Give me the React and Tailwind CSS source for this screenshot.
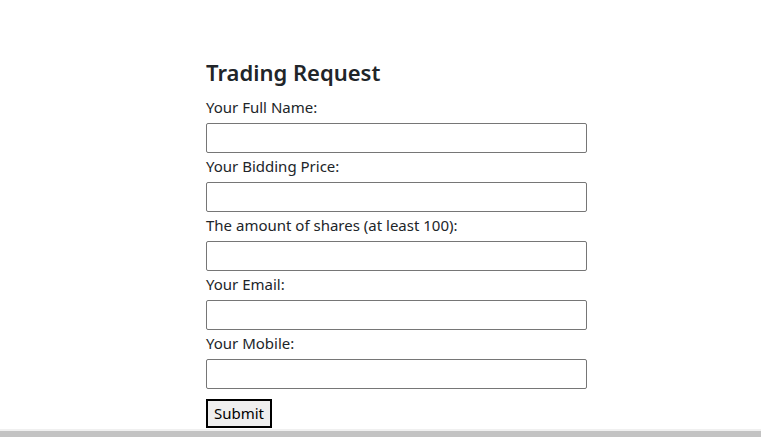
export default function App() {
  const fields = [
    "Your Full Name:",
    "Your Bidding Price:",
    "The amount of shares (at least 100):",
    "Your Email:",
    "Your Mobile:",
  ];
  return (
    <div className="flex min-h-[437px] flex-col bg-white text-[#212529]" style={{ fontFamily: '"Noto Sans", "Open Sans", sans-serif' }}>
      <div className="flex flex-1 justify-start">
        <form className="ml-[206px] mt-[58px] flex w-[381px] flex-col">
          <h3 className="mb-2 text-[22px] font-semibold leading-[29px]">Trading Request</h3>
          {fields.map((f, i) => (
            <div key={i} className="flex flex-col">
              <label className={`${i === 0 ? "" : "mt-[1px]"} text-[15px] leading-[24px]`}>{f}</label>
              <input type="text" className="mt-[4px] h-[30px] w-[381px] rounded-[2px] border border-[#767676] bg-white px-1" />
            </div>
          ))}
          <div className="mt-[10px]">
            <button type="button" className="h-[29px] w-[66px] border-2 border-black bg-[#efefef] text-[15px] leading-none text-black">
              Submit
            </button>
          </div>
        </form>
      </div>
      <div className="h-[2px] bg-[#f0f0f0]" />
      <div className="h-[6px] bg-[#c3c3c3]" />
    </div>
  );
}
